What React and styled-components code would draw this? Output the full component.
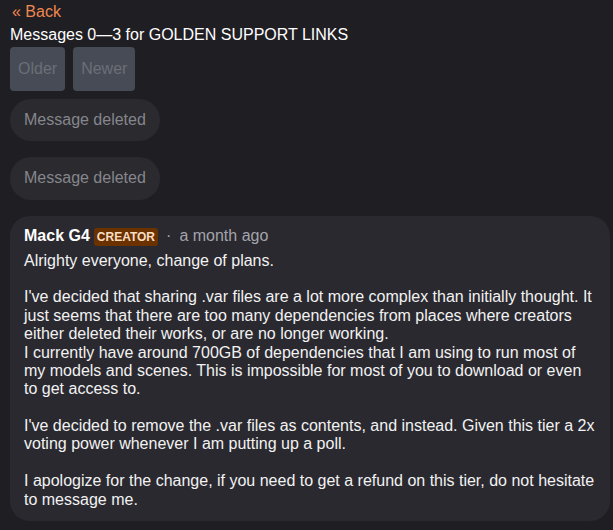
import React from "react";
import styled, { createGlobalStyle } from "styled-components";

// ---------------- GLOBAL ----------------

const GlobalStyle = createGlobalStyle`
  html, body {
    margin: 0;
    padding: 0;
    background: #1f1e23;
  }
  body {
    font-family: "Liberation Sans", Arial, sans-serif;
    font-size: 16px;
    line-height: 1.15;
    color: #f2f2f2;
  }
  * {
    box-sizing: border-box;
  }
`;

// ---------------- STYLED COMPONENTS ----------------

const Page = styled.div`
  padding: 3px 3px 10px 10px;
  min-height: 530px;
`;

const BackLink = styled.a`
  display: inline-block;
  margin-left: 2px;
  color: #f0874f;
  text-decoration: none;
  cursor: pointer;
`;

const Title = styled.div`
  margin-top: 5px;
  color: #ffffff;
`;

const Pager = styled.div`
  display: flex;
  gap: 8px;
  margin-top: 2px;
`;

const PageButton = styled.button`
  height: 44px;
  padding: 0 8px;
  border: none;
  border-radius: 4px;
  background: #464b55;
  color: #6b6f77;
  font: inherit;
  cursor: default;
`;

const MessageList = styled.div`
  display: flex;
  flex-direction: column;
  align-items: flex-start;
  gap: 16px;
  margin-top: 8px;
`;

const DeletedBubble = styled.div`
  padding: 12px 14px;
  border-radius: 21px;
  background: #2a2a2f;
  color: #86868c;
`;

const Card = styled.div`
  width: 600px;
  padding: 12px 14px 12px;
  border-radius: 20px;
  background: #2a2930;
`;

const NameRow = styled.div`
  display: flex;
  align-items: center;
  height: 18px;
  margin-bottom: 6px;
`;

const Author = styled.span`
  font-weight: bold;
  color: #ffffff;
`;

const Badge = styled.span`
  margin: 0 4px;
  padding: 0 3px;
  height: 18px;
  line-height: 18px;
  border-radius: 3px;
  background: #6b3200;
  color: #f8dfc4;
  font-size: 12px;
  font-weight: bold;
  text-transform: uppercase;
`;

const Dot = styled.span`
  margin: 0 8px 0 4px;
  color: #a4a4ab;
`;

const Time = styled.span`
  color: #a4a4ab;
`;

const Body = styled.div`
  white-space: pre-line;
  color: #f2f2f2;
`;

// ---------------- DATA ----------------

const message = {
  author: "Mack G4",
  role: "Creator",
  time: "a month ago",
  text:
    "Alrighty everyone, change of plans.\n\n" +
    "I've decided that sharing .var files are a lot more complex than initially thought. It just seems that there are too many dependencies from places where creators either deleted their works, or are no longer working.\n" +
    "I currently have around 700GB of dependencies that I am using to run most of my models and scenes. This is impossible for most of you to download or even to get access to.\n\n" +
    "I've decided to remove the .var files as contents, and instead. Given this tier a 2x voting power whenever I am putting up a poll.\n\n" +
    "I apologize for the change, if you need to get a refund on this tier, do not hesitate to message me.",
};

const App = () => {
  return (
    <>
      <GlobalStyle />
      <Page>
        <BackLink>« Back</BackLink>
        <Title>Messages 0—3 for GOLDEN SUPPORT LINKS</Title>

        <Pager>
          <PageButton disabled>Older</PageButton>
          <PageButton disabled>Newer</PageButton>
        </Pager>

        <MessageList>
          <DeletedBubble>Message deleted</DeletedBubble>
          <DeletedBubble>Message deleted</DeletedBubble>

          <Card>
            <NameRow>
              <Author>{message.author}</Author>
              <Badge>{message.role}</Badge>
              <Dot>·</Dot>
              <Time>{message.time}</Time>
            </NameRow>
            <Body>{message.text}</Body>
          </Card>
        </MessageList>
      </Page>
    </>
  );
};

export default App;
